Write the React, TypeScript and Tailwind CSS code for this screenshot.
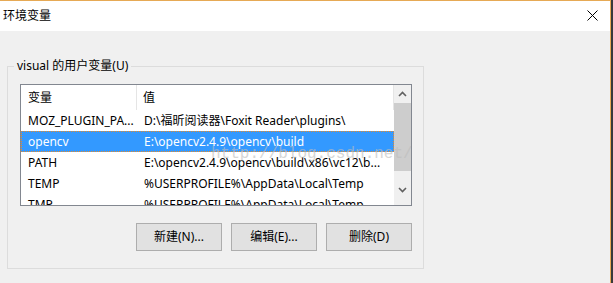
import React from "react";

const FONT = '"Noto Sans", "Noto Sans CJK SC", sans-serif';

const rows: [string, string][] = [
  ["MOZ_PLUGIN_PA...", "D:\\福昕阅读器\\Foxit Reader\\plugins\\"],
  ["opencv", "E:\\opencv2.4.9\\opencv\\build"],
  ["PATH", "E:\\opencv2.4.9\\opencv\\build\\x86\\vc12\\b..."],
  ["TEMP", "%USERPROFILE%\\AppData\\Local\\Temp"],
  ["TMP", "%USERPROFILE%\\AppData\\Local\\Temp"],
];

function Btn({ label }: { label: string }) {
  return (
    <button className="w-[86px] h-[28px] bg-[#e1e1e1] border border-[#adadad] text-[12px] text-black flex items-center justify-center">
      {label}
    </button>
  );
}

export default function App() {
  return (
    <div
      className="w-[613px] h-[283px] overflow-hidden bg-[#f0f0f0] flex"
      style={{ fontFamily: FONT }}
    >
      <div className="flex-1 flex flex-col border-t border-[#e6a955] overflow-hidden">
        {/* title bar */}
        <div className="h-[30px] shrink-0 bg-white flex items-center justify-between pl-[3px] pr-[12px]">
          <span className="text-[12px] text-black leading-none">环境变量</span>
          <svg width="11" height="11" viewBox="0 0 11 11" className="mt-[-1px]">
            <path d="M0.5 0.5 L10.5 10.5 M10.5 0.5 L0.5 10.5" stroke="#000" strokeWidth="1" />
          </svg>
        </div>
        {/* content */}
        <div className="shrink-0 pl-[7px] pt-[35px] flex flex-col">
          <div className="relative shrink-0 w-[417px] h-[203px] border border-[#dcdcdc] pl-[12px] pt-[17px]">
            <div className="absolute left-[6px] top-[-10px] px-[3px] bg-[#f0f0f0] text-[12px] text-black leading-[18px]">
              visual 的用户变量(U)
            </div>
            {/* list box */}
            <div className="relative w-[392px] h-[122px] border border-[#828790] bg-white flex overflow-hidden">
              <div className="w-[373px] flex flex-col">
                <div className="h-[25px] flex text-[12px] text-black shrink-0">
                  <div className="w-[116px] border-r border-[#e5e5e5] pl-[7px] flex items-center">变量</div>
                  <div className="flex-1 border-r border-[#e5e5e5] pl-[6px] flex items-center">值</div>
                </div>
                {rows.map(([k, v], i) => {
                  const sel = i === 1;
                  return (
                    <div
                      key={k}
                      className={
                        sel
                          ? "h-[21px] shrink-0 flex text-[12px] text-white bg-[#3399ff] border border-dotted border-[#e58a2b]"
                          : "h-[21px] shrink-0 flex text-[12px] text-black border border-transparent"
                      }
                    >
                      <div className="w-[116px] pl-[6px] flex items-center whitespace-nowrap overflow-hidden">{k}</div>
                      <div className="flex-1 pl-[6px] flex items-center whitespace-nowrap overflow-hidden">{v}</div>
                    </div>
                  );
                })}
              </div>
              {/* scrollbar */}
              <div className="w-[17px] bg-[#f0f0f0] flex flex-col">
                <div className="h-[18px] flex items-center justify-center">
                  <svg width="9" height="6" viewBox="0 0 9 6">
                    <path d="M1 5 L4.5 1.5 L8 5" stroke="#606060" strokeWidth="1.6" fill="none" />
                  </svg>
                </div>
                <div className="h-[68px] bg-[#cdcdcd]" />
                <div className="flex-1 flex items-center justify-center pt-[3px]">
                  <svg width="9" height="6" viewBox="0 0 9 6">
                    <path d="M1 1 L4.5 4.5 L8 1" stroke="#606060" strokeWidth="1.6" fill="none" />
                  </svg>
                </div>
              </div>
              {/* watermark */}
              <div
                className="absolute left-[190px] top-[59px] text-[16px] leading-[20px] text-[#bdbdbd] opacity-60 whitespace-nowrap pointer-events-none"
                style={{ fontFamily: '"Liberation Mono", monospace' }}
              >
                http://blog.csdn.net/
              </div>
            </div>
            {/* buttons */}
            <div className="w-[392px] flex justify-end gap-[9px] mt-[17px]">
              <Btn label="新建(N)..." />
              <Btn label="编辑(E)..." />
              <Btn label="删除(D)" />
            </div>
          </div>
          <div className="pl-[9px] pt-[12px] text-[12px] text-black leading-[18px]">系统变量(S)</div>
        </div>
      </div>
      <div className="w-[1px] bg-[#e6a955]" />
      <div className="w-[2px] bg-[#3a3a3a]" />
    </div>
  );
}
